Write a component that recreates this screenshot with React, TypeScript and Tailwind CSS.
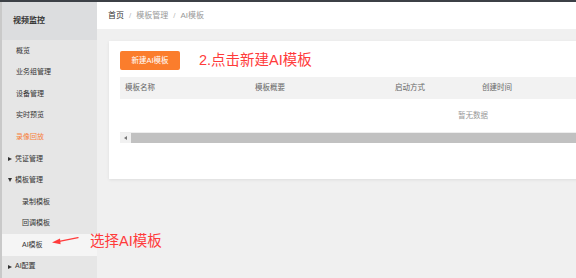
const menu: { label: string; kind?: "active" | "closed" | "open" | "sub" | "current" }[] = [
	{ label: "概览" },
	{ label: "业务组管理" },
	{ label: "设备管理" },
	{ label: "实时预览" },
	{ label: "录像回放", kind: "active" },
	{ label: "凭证管理", kind: "closed" },
	{ label: "模板管理", kind: "open" },
	{ label: "录制模板", kind: "sub" },
	{ label: "回调模板", kind: "sub" },
	{ label: "AI模板", kind: "current" },
	{ label: "AI配置", kind: "closed" },
];

const columns = [
	{ label: "模板名称", w: "w-[130px]" },
	{ label: "模板概要", w: "w-[140px]" },
	{ label: "启动方式", w: "w-[87px]" },
	{ label: "创建时间", w: "w-[100px]" },
];

export default function App() {
	return (
		<div className="relative flex h-[278px] w-[576px] flex-col overflow-hidden bg-[#f0f0f0] font-['Liberation_Sans','Noto_Sans_CJK_SC',sans-serif]">
			{/* top strip */}
			<div className="h-[2px] shrink-0 bg-[#3c4046]" />

			<div className="flex min-h-0 flex-1">
				{/* Sidebar */}
				<aside className="w-[97px] shrink-0 border-l-2 border-[#c9c9c9] bg-[#e6e6e6]">
					<div className="flex h-[38px] items-center bg-[#dcdddf] pl-[11px] text-[8px] font-bold text-[#333]">视频监控</div>
					{menu.map((m) => (
						<div
							key={m.label}
							className={`flex h-[21.6px] items-center text-[7px] ${m.kind === "current" ? "bg-[#f5f5f5]" : ""} ${m.kind === "active" ? "text-[#f7803a]" : "text-[#333]"} ${m.kind === "sub" || m.kind === "current" ? "pl-[20px]" : "pl-[14px]"}`}
						>
							{m.kind === "closed" && <span className="-ml-[8px] mr-[3px] inline-block h-0 w-0 border-y-[2.5px] border-l-[4px] border-y-transparent border-l-[#333]" />}
							{m.kind === "open" && <span className="-ml-[8px] mr-[3px] inline-block h-0 w-0 border-x-[2.5px] border-t-[4px] border-x-transparent border-t-[#333]" />}
							{m.label}
						</div>
					))}
				</aside>

				{/* Main */}
				<main className="min-w-0 flex-1 overflow-hidden">
					<div className="flex h-[27px] items-center gap-[5px] bg-white pl-[11px] text-[8px]">
						<span className="text-[#333]">首页</span>
						<span className="text-[#bbb]">/</span>
						<span className="text-[#999]">模板管理</span>
						<span className="text-[#bbb]">/</span>
						<span className="text-[#999]">AI模板</span>
					</div>

					<div className="pl-[12px] pt-[12px]">
						<div className="w-[520px] bg-white px-[11px] pb-[36px] pt-[10px] shadow-[0_1px_3px_rgba(0,0,0,0.08)]">
							<div className="flex items-center">
								<button className="flex h-[19px] w-[60px] items-center justify-center rounded-[2px] bg-[#fb7d2c] text-[7.5px] text-white">新建AI模板</button>
								<span className="ml-[19px] text-[14.5px] leading-none text-[#ff3b3b]">2.点击新建AI模板</span>
							</div>

							<div className="mt-[7px]">
								<div className="flex h-[22px] items-center bg-[#f2f2f2] pl-[5px] text-[7.5px] text-[#666]">
									{columns.map((c) => (
										<span key={c.label} className={`${c.w} shrink-0`}>{c.label}</span>
									))}
								</div>
								<div className="flex h-[34px] items-center border-b border-[#eee] pl-[338px] text-[7.5px] text-[#999]">暂无数据</div>
								<div className="flex h-[10px] items-stretch">
									<div className="flex w-[11px] items-center justify-center bg-[#f1f1f1]">
										<span className="inline-block h-0 w-0 border-y-[2px] border-r-[3px] border-y-transparent border-r-[#777]" />
									</div>
									<div className="flex-1 bg-[#c1c1c1]" />
								</div>
							</div>
						</div>
					</div>
				</main>
			</div>

			{/* Annotation: arrow + label */}
			<svg className="absolute left-[50px] top-[234px]" width="30" height="14" viewBox="0 0 30 14">
				<path d="M8 7.6 L28 3.6" stroke="#ff3b3b" strokeWidth="1.4" strokeLinecap="round" />
				<polygon points="2,8.6 10,4.6 10.6,10.2" fill="#ff3b3b" />
			</svg>
			<span className="absolute left-[90px] top-[234px] text-[14.5px] leading-none text-[#ff3b3b]">选择AI模板</span>
		</div>
	);
}
